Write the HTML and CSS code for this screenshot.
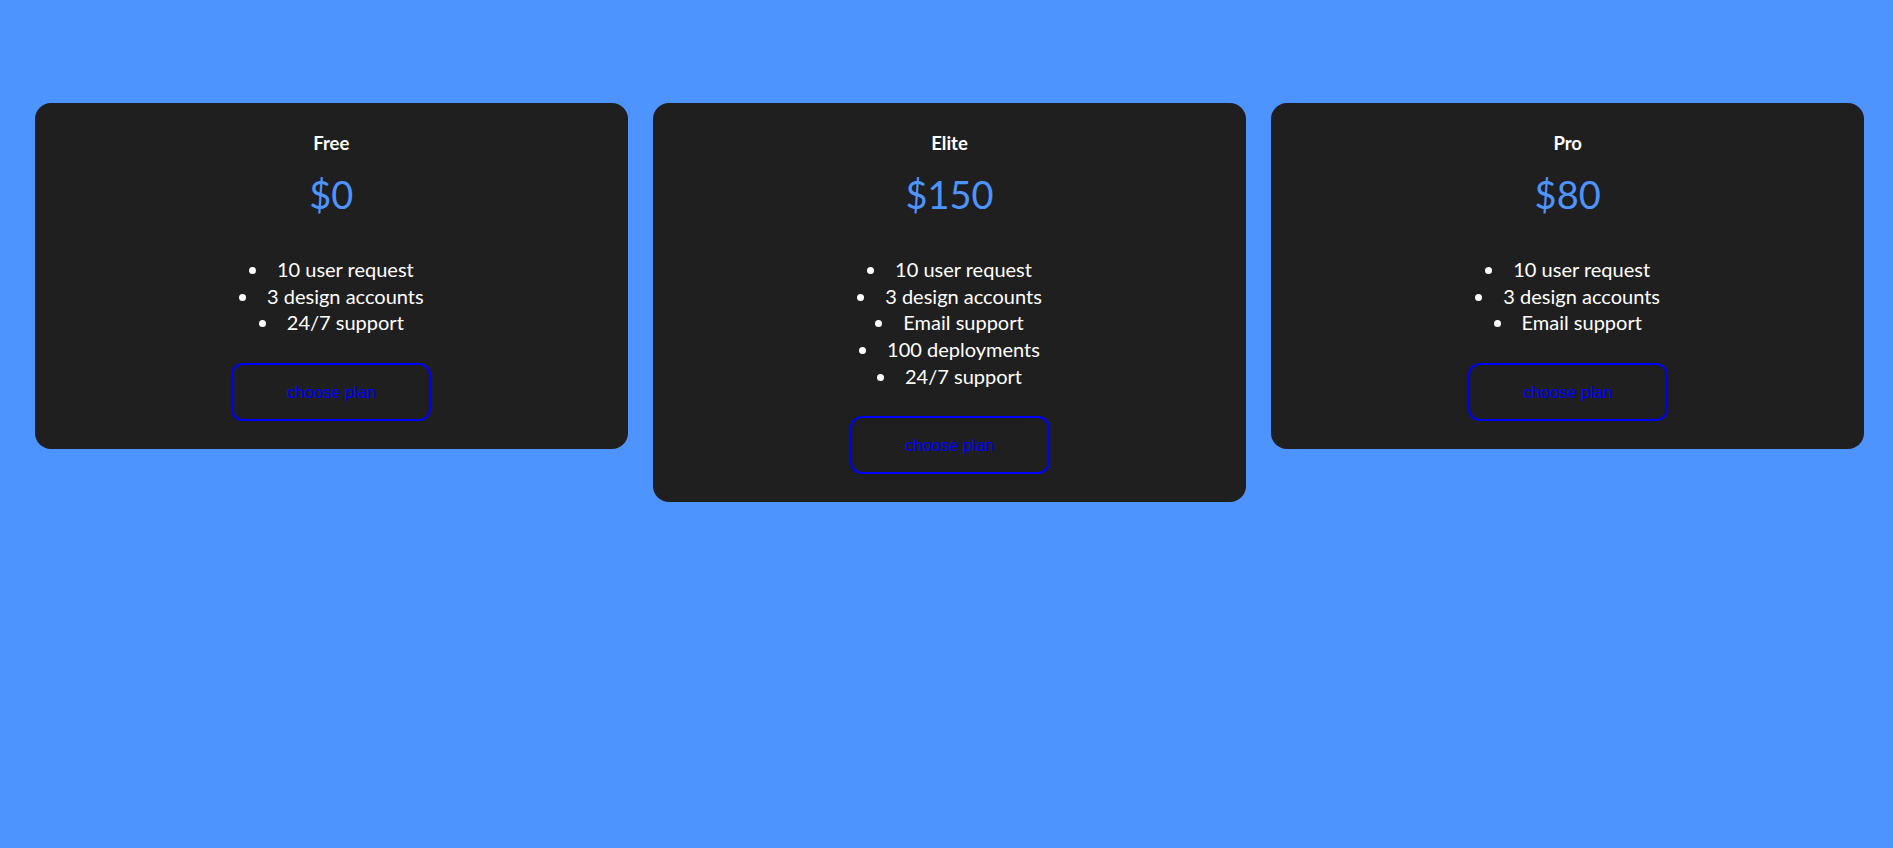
FILE: index.html
```html
<!DOCTYPE html>
<html lang="en">
<head>
<meta charset="utf-8">
<title>Pricing</title>
<link rel="stylesheet" href="styles.css">
</head>
<body>
<main class="pricing">
  <section class="card">
    <h3 class="plan-name">Free</h3>
    <p class="price">$0</p>
    <ul class="features">
      <li>10 user request</li>
      <li>3 design accounts</li>
      <li>24/7 support</li>
    </ul>
    <button class="choose">choose plan</button>
  </section>
  <section class="card">
    <h3 class="plan-name">Elite</h3>
    <p class="price">$150</p>
    <ul class="features">
      <li>10 user request</li>
      <li>3 design accounts</li>
      <li>Email support</li>
      <li>100 deployments</li>
      <li>24/7 support</li>
    </ul>
    <button class="choose">choose plan</button>
  </section>
  <section class="card">
    <h3 class="plan-name">Pro</h3>
    <p class="price">$80</p>
    <ul class="features">
      <li>10 user request</li>
      <li>3 design accounts</li>
      <li>Email support</li>
    </ul>
    <button class="choose">choose plan</button>
  </section>
</main>
</body>
</html>
```

FILE: styles.css
```css
html, body {
  margin: 0;
  padding: 0;
}

body {
  background: #4d94ff;
  min-height: 848px;
  font-family: Lato, "Open Sans", "Noto Sans", sans-serif;
  color: #ffffff;
}

.pricing {
  display: flex;
  align-items: flex-start;
  gap: 25.5px;
  padding: 103px 29px 0 35px;
}

.card {
  flex: 1 1 0;
  background: #1f1f1f;
  border-radius: 16px;
  padding: 28px 0 28px;
  display: flex;
  flex-direction: column;
  align-items: center;
  text-align: center;
}

.plan-name {
  margin: 0;
  font-size: 18.5px;
  line-height: 24px;
  font-weight: 700;
  color: #ffffff;
}

.price {
  margin: 14px 0 0;
  font-size: 38px;
  line-height: 50px;
  font-weight: 400;
  color: #4d94ff;
}

.features {
  margin: 37px 0 0;
  padding: 0;
  list-style: disc inside;
  font-size: 20px;
  line-height: 26.67px;
  color: #ffffff;
}

.features li {
  padding: 0;
}

.choose {
  margin-top: 27px;
  width: 200px;
  height: 58px;
  background: transparent;
  border: 2px solid #0000ff;
  border-radius: 12px;
  color: #0000ff;
  font-family: "Liberation Sans", Arial, sans-serif;
  font-size: 16.5px;
  padding: 0;
  cursor: pointer;
}
```
